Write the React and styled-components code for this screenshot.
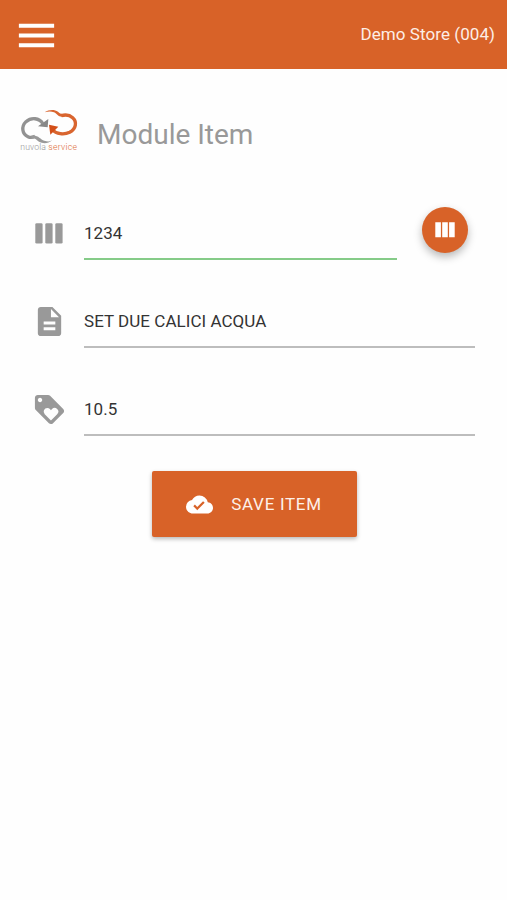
import React from 'react';
import styled, { createGlobalStyle } from 'styled-components';
import { MdMenu, MdDescription, MdLoyalty, MdCloudDone } from 'react-icons/md';

const App = () => {
    return(
        <Page>
            <GlobalStyle />
            <TopBar>
                <MenuButton aria-label="Menu"><MdMenu /></MenuButton>
                <StoreName>Demo Store (004)</StoreName>
            </TopBar>
            <Heading>
                <Logo />
                <Title>Module Item</Title>
            </Heading>
            <Form>
                <Row>
                    <FieldIcon><Columns /></FieldIcon>
                    <Field $active defaultValue="1234" />
                    <ScanButton type="button" aria-label="Scan"><ColumnsSquare /></ScanButton>
                </Row>
                <Row>
                    <FieldIcon><MdDescription /></FieldIcon>
                    <Field defaultValue="SET DUE CALICI ACQUA" />
                </Row>
                <Row>
                    <FieldIcon><MdLoyalty /></FieldIcon>
                    <Field defaultValue="10.5" />
                </Row>
                <SaveButton type="button">
                    <MdCloudDone />
                    <span>SAVE ITEM</span>
                </SaveButton>
            </Form>
        </Page>
    )
};

const Columns = () => (
    <svg width="29" height="21" viewBox="0 0 29 21" fill="currentColor">
        <rect x=".3" y=".2" width="7.3" height="20.4" rx="1.4" />
        <rect x="10.3" y=".2" width="7.3" height="20.4" rx="1.4" />
        <rect x="20.3" y=".2" width="7.3" height="20.4" rx="1.4" />
    </svg>
);

const ColumnsSquare = () => (
    <svg width="20" height="16" viewBox="0 0 20 16" fill="currentColor">
        <path d="M.3.3h5.6v15H.3zM7.2.3h5.6v15H7.2zM14.1.3h5.6v15h-5.6z" />
    </svg>
);

const Logo = () => (
    <LogoSvg viewBox="27 27 180 129" fill="none">
        <path d="M98 70C88 54 64 51 48 65C33 80 36 102 54 110C60 113 67 113 75 109" stroke="#929292" strokeWidth="10" />
        <path d="M64 107C84 103 90 118 103 122C112 125 120 125 127 121C113 132 98 131 87 125C78 119 76 113 64 115Z" fill="#999" />
        <path d="M115 57L113 82L84 79Z" fill="#888" />
        <path d="M128 90C138 102 162 105 179 97C198 87 202 66 188 53C179 45 168 43 154 47" stroke="#d9652f" strokeWidth="10" />
        <path d="M104 37C116 29 132 27 144 35C150 41 155 43 163 41L160 50C145 53 142 41 132 37C123 33 114 34 104 37Z" fill="#d9652f" />
        <path d="M117 74L145 80L121 104Z" fill="#d34f18" />
        <LogoText x="31" y="149" textLength="77" fill="#999">nuvola</LogoText>
        <LogoText x="115" y="149" textLength="86" fill="#dd6b38">service</LogoText>
    </LogoSvg>
);


export default App;


const GlobalStyle = createGlobalStyle`
    body {
        margin: 0;
        background: #fefefe;
        font-family: Roboto, sans-serif;
    }
    *, *::before, *::after {
        box-sizing: border-box;
    }
    button, input {
        font-family: inherit;
        border: 0;
        border-radius: 0;
        outline: none;
        padding: 0;
    }
`;
const Page = styled.div`
    min-height: 900px;
    background: #fefefe;
`;
const TopBar = styled.header`
    height: 69px;
    padding: 0 12px 0 13px;
    display: flex;
    align-items: center;
    justify-content: space-between;
    background: #d86228;
    color: #fff;
`;
const MenuButton = styled.button`
    display: flex;
    margin-top: 2px;
    background: none;
    color: #fff;
    font-size: 47px;
`;
const StoreName = styled.span`
    margin-top: -1px;
    font-size: 17px;
    letter-spacing: 0.07px;
    color: #fdeee6;
`;
const Heading = styled.div`
    height: 88px;
    padding: 40px 0 0 19px;
    display: flex;
`;
const LogoSvg = styled.svg`
    width: 60px;
    height: 43px;
    flex: none;
`;
const LogoText = styled.text`
    font-family: Roboto, sans-serif;
    font-size: 26px;
    font-weight: 300;
`;
const Title = styled.h1`
    margin: 7px 0 0 18px;
    font-size: 28px;
    line-height: 38px;
    font-weight: 400;
    color: #999;
`;
const Form = styled.form`
    padding: 42px 32px 0;
    display: flex;
    flex-direction: column;
`;
const Row = styled.div`
    height: 61px;
    margin-bottom: 27px;
    display: flex;
    align-items: flex-start;
`;
const FieldIcon = styled.div`
    width: 35px;
    height: 35px;
    margin: 17px 17px 0 0;
    display: flex;
    align-items: center;
    justify-content: center;
    font-size: 35px;
    color: #999;
`;
const Field = styled.input`
    flex: 1;
    min-width: 0;
    height: 61px;
    padding-top: 9px;
    font-size: 17px;
    letter-spacing: 0.04px;
    color: #333;
    background: transparent;
    border-bottom: 2px solid ${(props) => (props.$active ? '#85cb88' : '#bdbdbd')};
`;
const ScanButton = styled.button`
    width: 46px;
    height: 46px;
    margin: 8px 7px 0 25px;
    display: flex;
    align-items: center;
    justify-content: center;
    border-radius: 50%;
    background: #d86228;
    color: #fff;
    box-shadow: 0 4px 9px rgba(0, 0, 0, 0.28);
`;
const SaveButton = styled.button`
    align-self: center;
    width: 205px;
    height: 66px;
    margin: 8px 0 0 1px;
    display: flex;
    align-items: center;
    justify-content: center;
    gap: 18px;
    border-radius: 2px;
    background: #d86228;
    color: #fdf1ea;
    font-size: 17px;
    letter-spacing: 0.7px;
    box-shadow: 0 2px 4px rgba(0, 0, 0, 0.28);

    svg {
        margin-top: 1px;
        font-size: 27px;
        color: #fff;
    }
`;
